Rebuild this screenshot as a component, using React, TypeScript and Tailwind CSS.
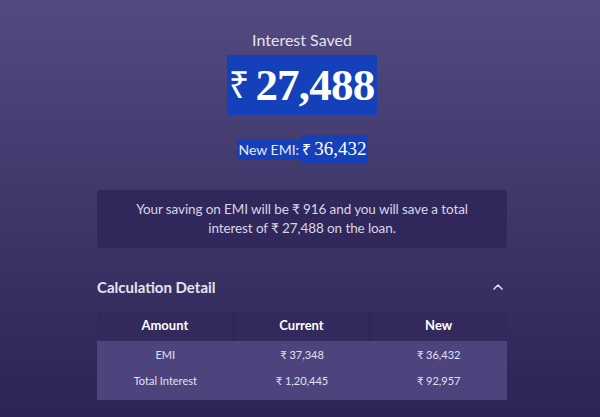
import React from "react";

export default function App() {
  const sans = { fontFamily: "Lato, 'Noto Sans', sans-serif" };
  const serif = { fontFamily: "'Liberation Serif', 'DejaVu Serif', serif" };
  const rupee = { fontFamily: "'Noto Sans', sans-serif" };
  return (
    <div
      className="w-[600px] h-[417px] overflow-hidden flex justify-center pl-[4px] bg-gradient-to-b from-[#534a80] to-[#2c2454]"
      style={sans}
    >
      <div className="w-[410px] flex flex-col items-center pt-[29px]">
        <div className="text-[16px] leading-[22px] text-[#e4e2f0]">Interest Saved</div>
        <div className="mt-[4px] h-[60px] pl-[2px] pr-[3px] flex items-center bg-[#1441b9] text-white text-[45px] leading-[60px] font-bold tracking-[-0.8px]" style={serif}>
          <span className="text-[36px] font-normal mr-[7px]" style={rupee}>₹</span>27,488
        </div>
        <div className="mt-[20px] flex items-center">
          <span className="bg-[#1441b9] text-[#e8e8f4] text-[14px] leading-[21px] px-[2px]">New EMI:</span>
          <span className="bg-[#1441b9] text-white text-[19px] leading-[28px] px-[1px]" style={serif}>
            <span className="text-[16px] mr-[3px]" style={rupee}>₹</span>36,432
          </span>
        </div>
        <div className="mt-[27px] w-full h-[58px] rounded-[3px] bg-[#30285a] flex items-center justify-center text-center text-[13.5px] leading-[19px] tracking-[-0.1px] text-[#d8d5e8] px-[30px]">
          Your saving on EMI will be ₹ 916 and you will save a total interest of ₹ 27,488 on the loan.
        </div>
        <div className="mt-[28px] w-full flex items-center justify-between">
          <span className="text-[15px] font-bold text-[#e6e4f2]">Calculation Detail</span>
          <svg width="12" height="8" viewBox="0 0 12 8" className="mr-[3px]">
            <path d="M2 6 L6 2 L10 6" stroke="#dcd9ec" strokeWidth="1.6" fill="none" strokeLinecap="round" strokeLinejoin="round" />
          </svg>
        </div>
        <div className="mt-[13px] w-full">
          <div className="grid grid-cols-3 h-[29px] bg-[#33295d] text-white text-[13px] font-bold">
            <div className="flex items-center justify-center border-r border-[#2a2150]">Amount</div>
            <div className="flex items-center justify-center border-r border-[#2a2150]">Current</div>
            <div className="flex items-center justify-center">New</div>
          </div>
          <div className="bg-[#4d447e] text-[11px] text-[#e2e0f0] pt-[2px] pb-[5px]">
            <div className="grid grid-cols-3 h-[26px] items-center text-center">
              <div>EMI</div>
              <div>₹ 37,348</div>
              <div>₹ 36,432</div>
            </div>
            <div className="grid grid-cols-3 h-[26px] items-center text-center">
              <div>Total Interest</div>
              <div>₹ 1,20,445</div>
              <div>₹ 92,957</div>
            </div>
          </div>
        </div>
      </div>
    </div>
  );
}
